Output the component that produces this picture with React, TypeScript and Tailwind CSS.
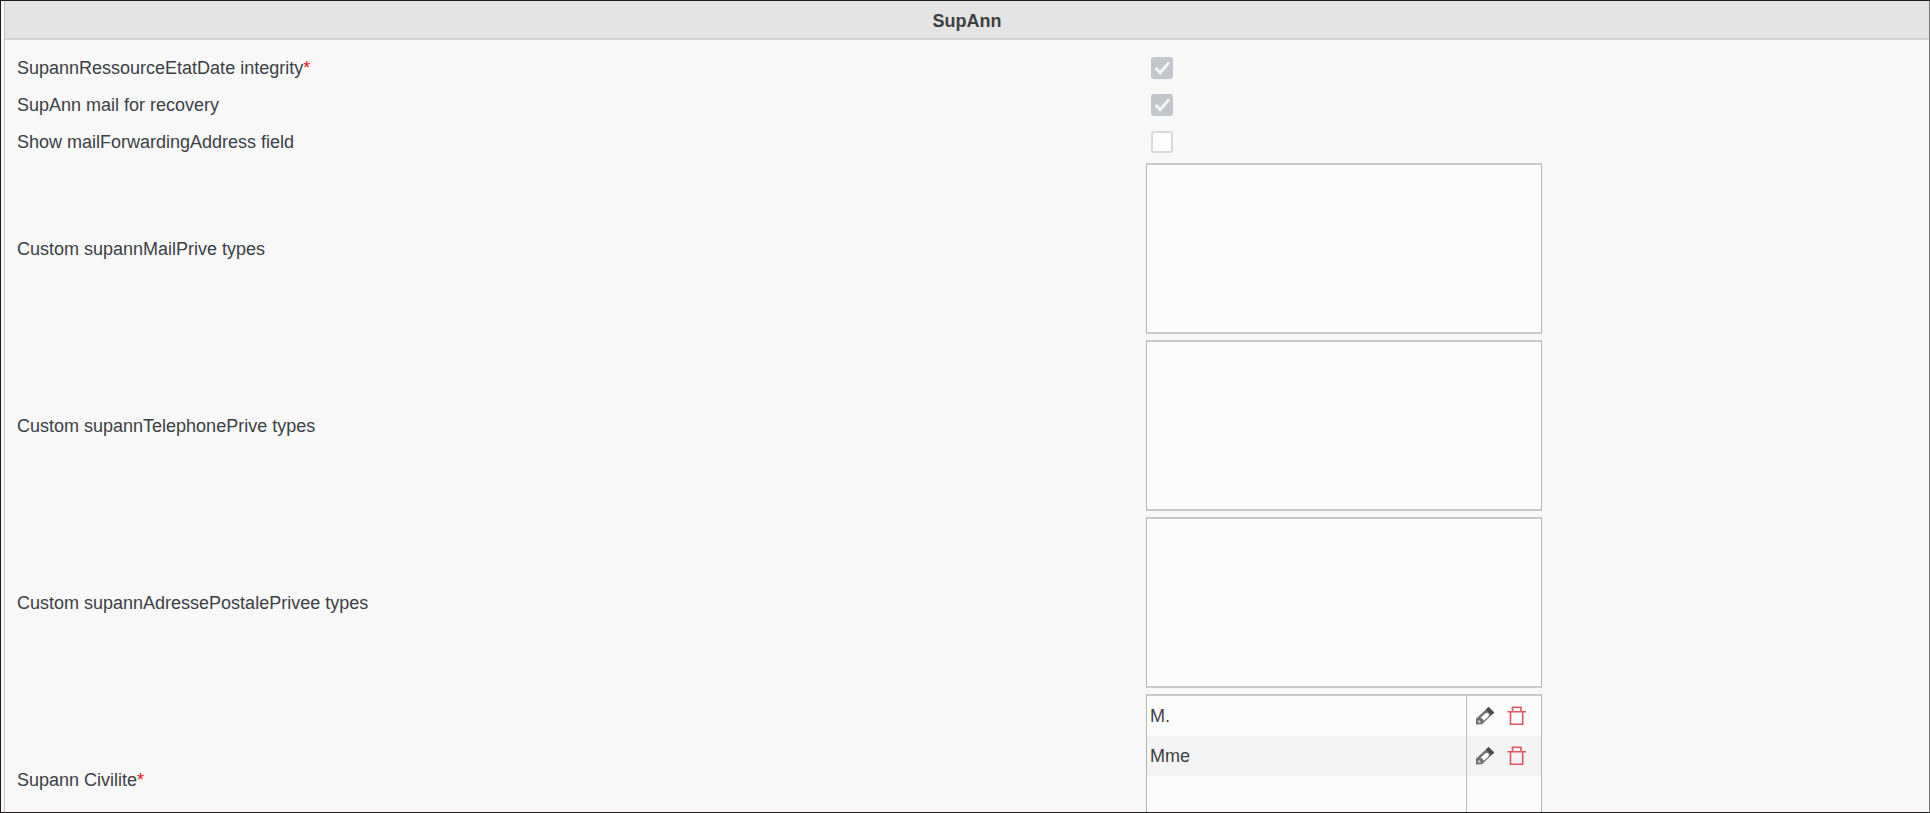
import { useState } from "react";

const CHECKBOXES = [
  { id: "etatDate", label: "SupannRessourceEtatDate integrity", required: true, checked: true },
  { id: "mailRecovery", label: "SupAnn mail for recovery", required: false, checked: true },
  { id: "mailForwarding", label: "Show mailForwardingAddress field", required: false, checked: false },
];

const LISTS: { id: string; label: string; required: boolean; values: string[] }[] = [
  { id: "mailPrive", label: "Custom supannMailPrive types", required: false, values: [] },
  { id: "telephonePrive", label: "Custom supannTelephonePrive types", required: false, values: [] },
  { id: "adressePrivee", label: "Custom supannAdressePostalePrivee types", required: false, values: [] },
  { id: "civilite", label: "Supann Civilite", required: true, values: ["M.", "Mme"] },
];

function PencilIcon() {
  return (
    <svg viewBox="0 0 20 20" className="w-5 h-5" aria-hidden="true">
      <path d="M1 12.8 13.6 1 19.2 6.4 7 18.2 1 18.6Z" fill="#6d6f70" />
      <path d="M13.6 1 19.2 6.4 16.4 9.2 10.8 3.6Z" fill="#4a4c4d" />
      <path d="M5.4 12 10 7.6Q12.4 6.2 13.6 7.4T13 11L8.6 14.8 7.6 12.8Z" fill="#fcfcfc" />
      <path d="M2.6 14.2 5.2 14.4 5.8 16.8 3.6 17Z" fill="#c9cacb" />
    </svg>
  );
}

function TrashIcon() {
  return (
    <svg viewBox="0 0 20 20" className="w-5 h-5" fill="none" stroke="#e05563" strokeWidth="1.6" aria-hidden="true">
      <path d="M.5 5.8h18.5M5.5 5.8V1.2h8.5v4.6M3.5 5.8v12.4h12.2V5.8" />
    </svg>
  );
}

function Required() {
  return <span className="text-[#ee1111]">*</span>;
}

function CheckField({ id, label, required, checked }: (typeof CHECKBOXES)[number]) {
  return (
    <div className="grid grid-cols-[51fr_35fr] items-center h-[37px]">
      <label htmlFor={id} className="pl-3">
        {label}
        {required && <Required />}
      </label>
      <div className="pl-[5px]">
        <div className="relative w-[22px] h-[22px]">
          <input
            id={id}
            type="checkbox"
            defaultChecked={checked}
            disabled
            className="peer block appearance-none w-full h-full rounded-[3px] border-2 border-[#d8d8dd] bg-[#fdfdfd] checked:bg-[#c5c5cc] checked:border-[#c5c5cc]"
          />
          <svg
            viewBox="0 0 22 22"
            className="absolute inset-0 hidden peer-checked:block pointer-events-none"
            fill="none"
            stroke="#f5f5f5"
            strokeWidth="3"
            strokeLinecap="round"
            aria-hidden="true"
          >
            <path d="m5.4 11.8 3.8 4L17.2 6.4" />
          </svg>
        </div>
      </div>
    </div>
  );
}

function ListField({ id, label, required, values }: (typeof LISTS)[number]) {
  const [items, setItems] = useState(values);

  return (
    <div className="grid grid-cols-[51fr_35fr] items-center">
      <div id={id} className="pl-3">
        {label}
        {required && <Required />}
      </div>
      <div className="w-[396px] max-w-full h-[171px] overflow-hidden border-x border-y-2 border-x-[#b4b4b4] border-y-[#cacaca] bg-[#fcfcfc]">
        {items.length > 0 && (
          <table aria-labelledby={id} className="w-full h-full border-separate border-spacing-0">
            <tbody>
              {items.map((item) => (
                <tr key={item} className="h-10 even:bg-[#f4f4f4]">
                  <td className="pl-[3px]">{item}</td>
                  <td className="w-[75px] border-l border-[#bcbcbc] pl-2">
                    <div className="flex items-center gap-3">
                      <button type="button" aria-label={`Edit ${item}`}>
                        <PencilIcon />
                      </button>
                      <button
                        type="button"
                        aria-label={`Delete ${item}`}
                        onClick={() => setItems(items.filter((i) => i !== item))}
                      >
                        <TrashIcon />
                      </button>
                    </div>
                  </td>
                </tr>
              ))}
              <tr>
                <td />
                <td className="border-l border-[#bcbcbc]" />
              </tr>
            </tbody>
          </table>
        )}
      </div>
    </div>
  );
}

export default function App() {
  return (
    <div className="h-screen overflow-hidden border border-[#1c191b] border-r-[#777777] bg-[#f8f8f8] pl-[3px] font-['Liberation_Sans',Arial,sans-serif] text-[18px] leading-6 text-[#3b4045]">
      <section className="border-l border-[#c8c5c8]">
        <h1 className="h-[39px] pt-2 border-b-2 border-[#d4d4d4] bg-[#e4e4e4] text-center font-bold">SupAnn</h1>
        <div className="pt-[9px]">
          {CHECKBOXES.map((field) => (
            <CheckField key={field.id} {...field} />
          ))}
        </div>
        <div className="flex flex-col gap-[6px] pt-[3px]">
          {LISTS.map((field) => (
            <ListField key={field.id} {...field} />
          ))}
        </div>
      </section>
    </div>
  );
}
